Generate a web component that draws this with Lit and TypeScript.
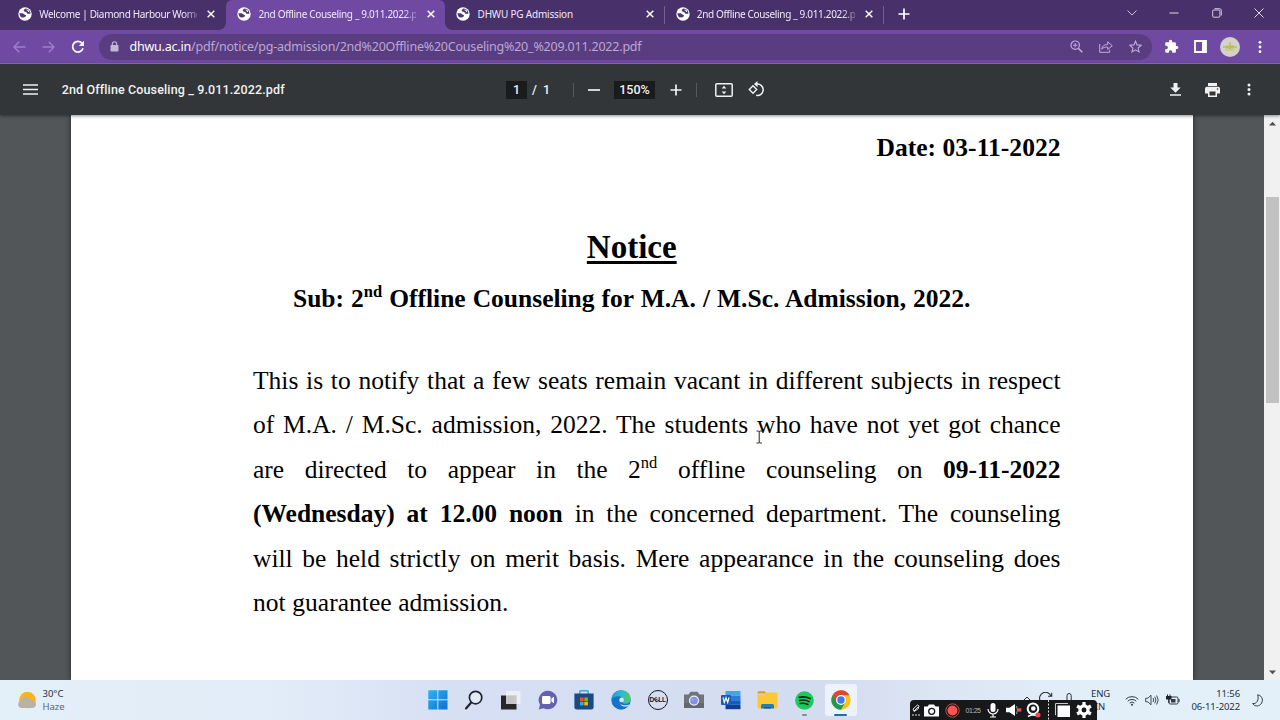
import { LitElement, html, css, svg } from "lit";
import { customElement } from "lit/decorators.js";
import { classMap } from "lit/directives/class-map.js";

const icon = (w: number, h: number, box: string, body: unknown) =>
  html`<svg width=${w} height=${h} viewBox=${box} fill="none">${body}</svg>`;

const globe = () =>
  icon(14, 14, "0 0 14 14", svg`<circle cx="7" cy="7" r="6.7" fill="#fff"/>
    <path d="M1.400 6.200 4.800 6.200 6.300 7.600 8.200 8.200 7.200 9.900 5.200 10.400 3 10.200A6 6 0 0 1 1.400 6.200Z" fill="#513577"/>
    <path d="M7.600 1.500 5.600 3.100 6.200 4.600 8.200 5 9.400 6.700 12.500 6.700A5.600 5.600 0 0 0 7.600 1.500Z" fill="#513577"/>
    <path d="M8.600 2.900 10.600 3.600 10.400 5" stroke="#fff" stroke-width="1"/>`);
const cross = () => icon(8, 8, "0 0 8 8", svg`<path d="M.7.7 7.3 7.3M7.3.7.7 7.3" stroke="#fff" stroke-width="1.5"/>`);

const winLogo = () => icon(20, 20, "0 0 20 20", svg`<defs><linearGradient id="w" x2="1" y2="1"><stop stop-color="#2fb4f0"/><stop offset="1" stop-color="#0872cf"/></linearGradient></defs>
  <path d="M.3.3h9v9h-9zM10.3.3h9.2v9h-9.2zM.3 10.3h9v9.2h-9zM10.3 10.3h9.2v9.2h-9.2z" fill="url(#w)"/>`);
const search = () => icon(20, 20, "0 0 20 20", svg`<circle cx="11.6" cy="7.6" r="6.2" fill="#e3ebf8" stroke="#20242c" stroke-width="1.7"/><path d="M7.2 12.5 2 18.4" stroke="#20242c" stroke-width="2.2" stroke-linecap="round"/>`);
const taskView = () => icon(20, 20, "0 0 20 20", svg`<path d="M0 5.5h15.5V19.5H0z" fill="#25272a"/><path d="M5 1h14.5v13H5z" fill="#f1f1f2" opacity=".9"/><path d="M5 5.5h10.5V14H5z" fill="#c6c6c6"/>`);
const chat = () => icon(20, 20, "0 0 20 20", svg`<path d="M10 .7a9.3 9.3 0 1 1-4.5 17.5L.8 19.4 2 14.8A9.3 9.3 0 0 1 10 .7Z" fill="#6461b5"/><rect x="4" y="6" width="8.6" height="8" rx="1.4" fill="#fff"/><path d="M13.4 8.6 16 6.8v6.5l-2.6-1.8z" fill="#fff"/>`);
const store = () => icon(20, 20, "0 0 20 20", svg`<path d="M5.8 5V1.6q0-.9.9-.9h6.6q.9 0 .9.9V5" stroke="#36a7df" stroke-width="1.4"/><path d="M.4 3.500h19.200V17q0 2.500-2.500 2.500H2.900Q.4 19.500.4 17z" fill="#194a80"/><path d="M6 7.500h3.600v3.600H6z" fill="#f25022"/><path d="M10.300 7.500h3.600v3.600h-3.600z" fill="#7fba00"/><path d="M6 11.800h3.600v3.600H6z" fill="#35a6ee"/><path d="M10.300 11.800h3.600v3.600h-3.600z" fill="#ffb900"/>`);
const edge = () => icon(20, 20, "0 0 20 20", svg`<defs><linearGradient id="e" x2="1"><stop stop-color="#239de0"/><stop offset=".6" stop-color="#35bdc8"/><stop offset="1" stop-color="#5cc84e"/></linearGradient></defs>
  <circle cx="10" cy="10" r="9.700" fill="#1473c8"/><path d="M.4 9C1.600 3 5.600.3 10.200.3c5.500 0 9.500 4 9.500 8.400 0 3-2.500 5-5.400 5-2 0-3.300-.7-2.800-1.600 1.800-2.700-.4-5.800-3.700-5.800-3.400 0-6.200 1.500-7.400 2.700Z" fill="url(#e)"/><path d="M8.300 9.200c-1.300 5 4 7.200 8.800 5.700l1.300-.7-1 1.700c-3.600 1.700-9.800.2-9.100-6.700Z" fill="#e3effa"/><circle cx="10.600" cy="9.900" r="2.300" fill="#dde8f8"/>`);
const dell = () => html`<span class="dell">D<i>E</i>LL</span>`;
const camera = () => icon(20, 18, "0 0 20 18", svg`<path d="M0 3.500h4.500L6.500.8h7l2 2.700H20V17H0z" fill="#70757c"/><path d="M0 12h20v5H0z" fill="#63676e"/><circle cx="10" cy="9.600" r="5.100" fill="#f2f1fa"/><circle cx="10" cy="9.600" r="3.900" fill="#8a8de8"/><circle cx="8.800" cy="8.500" r="1.600" fill="#6fb4ee"/>`);
const word = () => icon(20, 20, "0 0 20 20", svg`<path d="M4.500 1h15v4.700h-15z" fill="#41a5ee"/><path d="M4.500 5.700h15v4.600h-15z" fill="#2b7cd3"/><path d="M4.500 10.300h15v4.400h-15z" fill="#185abd"/><path d="M4.500 14.700h15v4.500h-15z" fill="#103f91"/><rect y="5" width="10" height="10" rx="1" fill="#185abd"/><path d="m2 7.500 1.300 5L5 7.800l1.700 4.700 1.300-5" stroke="#fff" stroke-width="1.200"/>`);
const folder = () => icon(21, 20, "0 0 21 20", svg`<path d="M.5 3q0-1.800 1.600-1.800h5.400L9.600 3.500H.5z" fill="#d99a1d"/><path d="M.5 4.500h7.200l2-1.900h10q.8 0 .8.900V17q0 1.500-1.500 1.500H2q-1.500 0-1.500-1.500z" fill="#fcc934"/><path d="M4 18.500v-3q0-1.500 1.500-1.500h10q1.500 0 1.500 1.500v3z" fill="#1f7dc0"/><path d="M7 17h7v1.500H7z" fill="#0f5d9c"/>`);
const spotify = () => icon(19, 19, "0 0 20 20", svg`<circle cx="10" cy="10" r="9.800" fill="#1fc75c"/><path d="M4.500 6.700c4-1 8-.6 11.500 1.300M5 10c3.500-.9 6.800-.5 9.800 1.200M5.500 13.200c3-.7 5.500-.4 8 1" stroke="#10231a" stroke-width="1.700" stroke-linecap="round"/>`);
const chrome = () => icon(20, 20, "0 0 20 20", svg`<circle cx="10" cy="10" r="9.700" fill="#fbc116"/><path d="M10 10 1.600 5.150A9.700 9.700 0 0 0 10 19.700L14.200 12.400Z" fill="#229a4b"/><path d="M1.600 5.150A9.700 9.700 0 0 1 18.400 5.150H10L5.800 12.400Z" fill="#e04535"/><circle cx="10" cy="10" r="4.900" fill="#fff"/><circle cx="10" cy="10" r="3.700" fill="#3b7ded"/>`);

@customElement("app-root")
class AppRoot extends LitElement {
  static styles = css`
    :host { display: flex; flex-direction: column; position: relative; width: 1280px; height: 720px; overflow: hidden; font-family: "Noto Sans", sans-serif; }
    * { box-sizing: border-box; }
    svg { display: block; flex: none; }
    .c { display: flex; align-items: center; justify-content: center; flex: none; }
    .tabs { height: 30px; background: #48306a; display: flex; padding-left: 7px; flex: none; color: #efe9f6; }
    .tab { width: 219.200px; display: flex; align-items: center; padding: 0 11px 2px; position: relative; }
    .tab.on { background: #7049a3; border-radius: 6px 6px 0 0; }
    .tab.on::before, .tab.on::after { content: ""; position: absolute; bottom: 0; width: 7px; height: 7px; }
    .tab.on::before { right: 100%; background: radial-gradient(circle at 0 0, transparent 6.500px, #7049a3 7px); }
    .tab.on::after { left: 100%; background: radial-gradient(circle at 100% 0, transparent 6.500px, #7049a3 7px); }
    .tab.sep { background: linear-gradient(#73608c, #73608c) right 6px / 1px 18px no-repeat; }
    .title { width: 158px; margin-left: 7.200px; font-size: 10px; letter-spacing: -.2px; white-space: nowrap; flex: none; line-height: 16px; }
    .title.fade { letter-spacing: -.34px; -webkit-mask: linear-gradient(90deg, #000 145px, transparent 164px); }
    .tab .x { margin-left: 10.300px; }
    .plus { width: 40px; height: 28px; }
    .win { margin-left: auto; display: flex; padding: 0 0 5px; }
    .win .c { width: 42.300px; }
    .bar { height: 34px; background: #7049a3; border-bottom: 1px solid #8d6cba; display: flex; align-items: center; padding: 0 6px 0 4.500px; flex: none; }
    .bar .n { width: 29.500px; }
    .omni { margin-left: 5.500px; width: 1053px; height: 26px; border-radius: 13px; background: #5a3d80; display: flex; align-items: center; padding-left: 11.500px; color: #bca6d5; flex: none; }
    .url { margin-left: 10.500px; font-size: 12.500px; line-height: 18px; letter-spacing: -.21px; white-space: nowrap; }
    .url b { font-weight: 400; color: #fff; }
    .acts { margin-left: auto; display: flex; padding-right: 1px; }
    .acts .c { width: 29.500px; }
    .ext { display: flex; margin-left: 5px; align-items: center; }
    .ext > .c { width: 29.600px; }
    .avatar { width: 20px; height: 20px; border-radius: 50%; background: #d3d1c8; }
    .pdf { height: 51px; background: #323639; display: flex; align-items: center; color: #f1f1f1; font: 500 12.500px Roboto, sans-serif; flex: none; position: relative; z-index: 1; box-shadow: 0 1px 3px rgba(0,0,0,.45); }
    .menu { width: 61px; }
    .name { width: 445px; padding-left: .7px; white-space: nowrap; letter-spacing: .13px; }
    .box { height: 18px; background: #191b1c; }
    .gap { width: 18px; }
    .fill { flex: 1; }
    .rule { width: 1px; height: 14px; background: #55595c; flex: none; }
    .view { flex: 1; min-height: 0; display: flex; background: #525659; }
    .page { margin-left: 71px; width: 1121.500px; background: #fff; padding: 14px 132px 0 182px; overflow: hidden; box-shadow: 0 0 5px rgba(0,0,0,.6); font: 25.500px "Liberation Serif", serif; color: #000; }
    .line { height: 44.600px; line-height: 44.600px; white-space: nowrap; text-align-last: justify; }
    .line.last { text-align-last: left; letter-spacing: .05px; }
    sup { font-size: 16.500px; line-height: 0; vertical-align: 10.500px; }
    .date { text-align: right; font-weight: 700; line-height: 38px; height: 38px; letter-spacing: .04px; }
    h1 { margin: 59px 0 0; padding-right: 50px; text-align: center; font-size: 33px; line-height: 42px; text-decoration: underline; text-decoration-thickness: 3px; text-underline-offset: 3px; }
    .sub { margin: 6px 90px 34.500px 40px; font-weight: 700; height: 50px; line-height: 50px; }
    .scroll { margin-left: auto; width: 16px; background: #f1f1f1; display: flex; flex-direction: column; align-items: center; padding: 6px 0 5px; }
    .thumb { width: 13px; height: 206px; background: #c1c1c1; margin-top: 71px; }
    .scroll .dn { margin-top: auto; }
    .task { height: 40px; flex: none; display: flex; align-items: center; background: linear-gradient(90deg, #e3eff9 0, #e2ecf8 22%, #d6dff3 36%, #d4dcf0 65%, #dbe4f3 72%, #e2eff9 85%, #e3f0fa 100%); color: #26303c; font-size: 9.500px; line-height: 13.500px; }
    .weather { width: 419.400px; padding-left: 16.500px; display: flex; align-items: center; gap: 6px; }
    .weather em { font-style: normal; color: #5b6673; }
    .app { width: 36.670px; height: 40px; position: relative; }
    .app.on::before { content: ""; position: absolute; inset: 4px 2px; border-radius: 3px; background: #eef2fb; }
    .app svg { position: relative; }
    .app.on::after, .app.run::after { content: ""; position: absolute; bottom: 4px; width: 13px; height: 2.500px; border-radius: 2px; background: #1d6fae; }
    .app.run::after { width: 5px; background: #858b96; }
    .dell { width: 20px; height: 20px; border: 1.500px solid #15181d; border-radius: 50%; font: 700 6.500px/17px "Liberation Sans", sans-serif; text-align: center; letter-spacing: -.2px; color: #15181d; }
    .dell i { display: inline-block; transform: rotate(-35deg); font-style: normal; }
    .tray { margin-left: auto; display: flex; align-items: center; height: 40px; }
    .under { display: flex; gap: 8px; align-self: flex-start; padding-top: 12px; margin-right: 18px; }
    .under svg:first-child { margin: 2px -1px 0 0; }
    .under svg:nth-child(2) { margin-right: 4px; }
    .lang { width: 30.500px; letter-spacing: -.1px; }
    .lang div + div { padding-left: 4px; }
    .tray .s { width: 20.500px; }
    .clock { width: 57px; text-align: right; letter-spacing: -.1px; }
    .moon { width: 40px; padding-right: 6px; }
    .rec { position: absolute; left: 910px; top: 700px; width: 187px; height: 20px; background: #17181a; border-radius: 4px 4px 0 0; display: flex; align-items: center; }
    .time { font: 7px "Liberation Sans", sans-serif; color: #b8b8b8; width: 18px; text-align: center; letter-spacing: -.5px; }
    .caret { position: absolute; left: 755px; top: 430px; }
  `;

  private tab(t: string, fade = true, on = false, sep = false) {
    return html`<div class=${classMap({ tab: true, on, sep })}>${globe()}<div class=${classMap({ title: true, fade })}>${t}</div><div class="x">${cross()}</div></div>`;
  }

  private cell(w: number, body: unknown) {
    return html`<div class="c" style="width:${w}px">${body}</div>`;
  }

  render() {
    const p = "#c3abdd";
    const apps: [unknown, string][] = [
      [winLogo(), ""], [search(), ""], [taskView(), ""], [chat(), ""], [store(), ""], [edge(), ""],
      [dell(), ""], [camera(), ""], [word(), ""], [folder(), ""], [spotify(), "run"], [chrome(), "on"],
    ];
    return html`
      <div class="tabs">
        ${this.tab("Welcome | Diamond Harbour Wome")}
        ${this.tab("2nd Offline Couseling _ 9.011.2022.p", true, true)}
        ${this.tab("DHWU PG Admission", false, false, true)}
        ${this.tab("2nd Offline Couseling _ 9.011.2022.p", true, false, true)}
        <div class="c plus">${icon(12, 12, "0 0 12 12", svg`<path d="M6 .5v11M.5 6h11" stroke="#fff" stroke-width="1.700"/>`)}</div>
        <div class="win">
          <div class="c">${icon(10, 6, "0 0 10 6", svg`<path d="m.5.5 4.500 4.500L9.500.5" stroke="#c9bdd8"/>`)}</div>
          <div class="c">${icon(10, 2, "0 0 10 2", svg`<path d="M.5 1h9" stroke="#e0d8ea"/>`)}</div>
          <div class="c">${icon(10, 10, "0 0 10 10", svg`<rect x=".7" y="2" width="7.200" height="7.200" rx="1" stroke="#d5cbe2"/><path d="M2.500.7h5q1.800 0 1.800 1.800v5" stroke="#d5cbe2"/>`)}</div>
          <div class="c">${icon(10, 10, "0 0 10 10", svg`<path d="m.5.5 9 9m0-9-9 9" stroke="#e0d8ea"/>`)}</div>
        </div>
      </div>
      <div class="bar">
        <div class="c n">${icon(13, 12, "0 0 13 12", svg`<path d="M12.500 6H1M6.200.8 1 6l5.200 5.200" stroke="#9f7fc8" stroke-width="1.400"/>`)}</div>
        <div class="c n">${icon(13, 12, "0 0 13 12", svg`<path d="M.5 6H12M6.800.8 12 6l-5.200 5.200" stroke="#9f7fc8" stroke-width="1.400"/>`)}</div>
        <div class="c n">${icon(14, 14, "0 0 14 14", svg`<path d="M12 8.300A5.300 5.300 0 1 1 11 3.300" stroke="#fff" stroke-width="1.700"/><path d="M13 .8v5.200H7.800z" fill="#fff"/>`)}</div>
        <div class="omni">
          ${icon(9, 11, "0 0 9 11", svg`<rect x=".5" y="4" width="8" height="6.500" rx=".8" fill="#c5b6d8"/><path d="M2.300 4.500V3a2.200 2.200 0 0 1 4.400 0v1.500" stroke="#c5b6d8" stroke-width="1.100"/>`)}
          <div class="url"><b>dhwu.ac.in</b>/pdf/notice/pg-admission/2nd%20Offline%20Couseling%20_%209.011.2022.pdf</div>
          <div class="acts">
            <div class="c">${icon(13, 13, "0 0 13 13", svg`<circle cx="5.200" cy="5.200" r="4.200" stroke=${p} stroke-width="1.200"/><path d="m8.300 8.300 4 4" stroke=${p} stroke-width="1.600"/><path d="M3 5.200h4.400M5.200 3v4.400" stroke=${p}/>`)}</div>
            <div class="c">${icon(14, 13, "0 0 14 13", svg`<path d="M.7 4v8.300h10V9.800" stroke=${p}/><path d="M2.700 9.300c.5-3.500 2.600-4.800 6-4.800V1.800l4.600 4-4.600 3.700V7C6 7 4 7.500 2.700 9.300Z" stroke=${p} stroke-linejoin="round"/>`)}</div>
            <div class="c">${icon(13, 13, "0 0 13 13", svg`<path d="m6.500 1.200 1.600 3.700 4 .4-3 2.700.9 3.900-3.500-2.100L3 11.900 3.900 8 .9 5.300l4-.4z" stroke=${p} stroke-width="1.100"/>`)}</div>
          </div>
        </div>
        <div class="ext">
          <div class="c">${icon(15, 15, "0 0 24 24", svg`<path d="M20.500 11H19V7c0-1.100-.9-2-2-2h-4V3.500a2.500 2.500 0 0 0-5 0V5H4c-1.100 0-2 .9-2 2v3.800h1.500a2.700 2.700 0 0 1 0 5.400H2V20c0 1.100.9 2 2 2h3.800v-1.500a2.700 2.700 0 0 1 5.400 0V22H17c1.100 0 2-.9 2-2v-4h1.500a2.500 2.500 0 0 0 0-5z" fill="#fff"/>`)}</div>
          <div class="c">${icon(13, 13, "0 0 13 13", svg`<path d="M1 1h11v11H1z" stroke="#fff" stroke-width="1.800"/><path d="M8 1h4v11H8z" fill="#fff"/>`)}</div>
          <div class="c"><div class="c avatar">${icon(14, 10, "0 0 14 10", svg`<path d="M0 5h14M7 0v8" stroke="#a5a979"/><path d="M3 3.500h8v3H3z" fill="#b8c440"/><path d="M2 8h10" stroke="#c8c861"/>`)}</div></div>
          <div class="c">${icon(4, 14, "0 0 4 14", svg`<circle cx="2" cy="2.300" r="1.400" fill="#fff"/><circle cx="2" cy="7" r="1.400" fill="#fff"/><circle cx="2" cy="11.700" r="1.400" fill="#fff"/>`)}</div>
        </div>
      </div>
      <div class="pdf">
        <div class="c menu">${icon(15, 11, "0 0 15 11", svg`<path d="M0 1h15M0 5.500h15M0 10h15" stroke="#f1f1f1" stroke-width="1.700"/>`)}</div>
        <div class="name">2nd Offline Couseling _ 9.011.2022.pdf</div>
        <div class="c box" style="width:21px">1</div>
        ${this.cell(28, html`/&nbsp; 1`)}
        <div class="gap"></div>
        <div class="rule"></div>
        ${this.cell(40, icon(12, 2, "0 0 12 2", svg`<path d="M0 1h12" stroke="#f1f1f1" stroke-width="1.700"/>`))}
        <div class="c box" style="width:41px">150%</div>
        ${this.cell(41, icon(12, 12, "0 0 12 12", svg`<path d="M6 .5v11M.5 6h11" stroke="#f1f1f1" stroke-width="1.700"/>`))}
        <div class="rule"></div>
        ${this.cell(54, icon(18, 14, "0 0 18 14", svg`<rect x=".8" y=".8" width="16.400" height="12.400" rx="1" stroke="#f1f1f1" stroke-width="1.500"/><path d="M9 2.700 11.300 5.500H6.700zM9 11.300 11.300 8.500H6.700z" fill="#f1f1f1"/>`))}
        ${this.cell(11, icon(17, 17, "0 0 17 17", svg`<path d="M5 4.800 8.700 8.500 5 12.200 1.300 8.500z" stroke="#f1f1f1" stroke-width="1.400"/><path d="M8.800 3.100a5.700 5.700 0 1 1-.6 11.200" stroke="#f1f1f1" stroke-width="1.500"/><path d="M9.500 0v6.200L6 3.100z" fill="#f1f1f1"/>`))}
        <div class="fill"></div>
        ${this.cell(37, icon(11, 13, "0 0 11 13", svg`<path d="M3.500 0h4v4.500h3.200L5.500 9.800.3 4.500h3.200zM0 11.200h11v1.500H0z" fill="#f1f1f1"/>`))}
        ${this.cell(37, icon(15, 14, "0 0 15 14", svg`<path d="M3 0h9v3H3z" fill="#f1f1f1"/><path d="M2 3.700h11q2 0 2 2V10.500h-3V14H3v-3.500H0V5.700q0-2 2-2zM4.500 8.500v4h6v-4z" fill="#f1f1f1" fill-rule="evenodd"/><circle cx="12.500" cy="6" r=".8" fill="#323639"/>`))}
        ${this.cell(36, icon(4, 13, "0 0 4 13", svg`<circle cx="2" cy="2" r="1.500" fill="#f1f1f1"/><circle cx="2" cy="6.500" r="1.500" fill="#f1f1f1"/><circle cx="2" cy="11" r="1.500" fill="#f1f1f1"/>`))}
        ${this.cell(13, "")}
      </div>
      <div class="view">
        <div class="page">
          <div class="date">Date: 03-11-2022</div>
          <h1>Notice</h1>
          <div class="line sub">Sub: 2<sup>nd</sup> Offline Counseling for M.A. / M.Sc. Admission, 2022.</div>
          <div class="line">This is to notify that a few seats remain vacant in different subjects in respect</div>
          <div class="line">of M.A. / M.Sc. admission, 2022. The students who have not yet got chance</div>
          <div class="line">are directed to appear in the 2<sup>nd</sup> offline counseling on <b>09-11-2022</b></div>
          <div class="line"><b>(Wednesday) at 12.00 noon</b> in the concerned department. The counseling</div>
          <div class="line">will be held strictly on merit basis. Mere appearance in the counseling does</div>
          <div class="line last">not guarantee admission.</div>
        </div>
        <div class="scroll">
          ${icon(7, 5, "0 0 7 5", svg`<path d="M0 4.500h7L3.500.8z" fill="#505050"/>`)}
          <div class="thumb"></div>
          <div class="dn">${icon(7, 5, "0 0 7 5", svg`<path d="M0 .5h7L3.500 4.200z" fill="#505050"/>`)}</div>
        </div>
      </div>
      <div class="task">
        <div class="weather">
          ${icon(20, 18, "0 0 20 18", svg`<circle cx="10.500" cy="9" r="8.300" fill="#f7b324"/><path d="M4 17a4 4 0 0 1-.5-7.500C5 6.500 8 5.500 10.500 6.500c2 .5 3 1.700 3.700 3 3-.2 4.800 1.200 4.800 3.700S17.200 17 15 17z" fill="#b9b2a4"/>`)}
          <div>30°C<br><em>Haze</em></div>
        </div>
        ${apps.map(([i, s]) => html`<div class="c app ${s}">${i}</div>`)}
        <div class="tray">
          <div class="under">
            ${icon(10, 10, "0 0 10 10", svg`<path d="m1 7 4-4 4 4" stroke="#26303c"/>`)}
            ${icon(14, 12, "0 0 14 12", svg`<path d="M1 8.500A5.800 5.800 0 0 1 12 4M12.700 .8V4.300H9" stroke="#26303c" stroke-width="1.100"/>`)}
            ${icon(8, 14, "0 0 8 14", svg`<rect x="2" y="1.500" width="4.200" height="12" rx="2.100" stroke="#26303c"/>`)}
          </div>
          <div class="lang"><div>ENG</div><div>IN</div></div>
          <div class="c s">${icon(14, 11, "0 0 14 11", svg`<path d="M.7 4.200a9 9 0 0 1 12.600 0M2.700 6.200a6.200 6.200 0 0 1 8.600 0M4.700 8.100a3.300 3.300 0 0 1 4.600 0" stroke="#303944"/><circle cx="7" cy="9.700" r="1" fill="#303944"/>`)}</div>
          <div class="c s">${icon(14, 12, "0 0 14 12", svg`<path d="M.7 4.200h2.200L6 1.200v9.600l-3.100-3H.7z" stroke="#303944" stroke-width=".9"/><path d="M8 4q1.300 2 0 4M9.800 2.700q2.200 3.300 0 6.600M11.700 1.500q3 4.500 0 9" stroke="#303944" stroke-width=".9"/>`)}</div>
          <div class="c s">${icon(14, 12, "0 0 14 12", svg`<rect x="3" y="3" width="9" height="7" rx="1.300" stroke="#303944"/><path d="M5 5h4.500v3.500H5z" fill="#303944"/><path d="M12.500 5h1v3h-1zM0 2h5.500v3.500H0zM1 .5h1V2H1zM3.500.5h1V2h-1zM2.300 5h1v4h-1z" fill="#1c232b"/>`)}</div>
          <div class="clock">11:56<br>06-11-2022</div>
          <div class="c moon">${icon(11, 13, "0 0 11 13", svg`<path d="M5.700.8c5 .7 6 6.500 3 9.500-2.500 2.500-6.500 2-8-.8 4 .7 6.500-3.500 5-8.700Z" stroke="#303944"/>`)}</div>
        </div>
      </div>
      <div class="rec">
        ${this.cell(12, icon(8, 12, "0 0 8 12", svg`<path d="m1 5 4.500-4 1.500 1-1 3-4 2.500zM2 7l4-4" stroke="#ddd"/><path d="M0 11h2M3 11h2M6 11h2" stroke="#ddd"/>`))}
        ${this.cell(18, icon(15, 13, "0 0 15 13", svg`<path d="M0 2.500h3.500L5 .5h5l1.500 2H15V12.500H0z" fill="#fff"/><circle cx="7.700" cy="7.300" r="3" stroke="#17181a" stroke-width="1.300"/>`))}
        ${this.cell(24, icon(15, 15, "0 0 15 15", svg`<circle cx="7.500" cy="7.500" r="6.700" stroke="#c74945"/><circle cx="7.500" cy="7.500" r="5" fill="#fa5550"/>`))}
        <div class="time">01:25</div>
        ${this.cell(21, icon(12, 15, "0 0 12 15", svg`<rect x="3.500" y="0" width="5" height="9" rx="2.500" fill="#fff"/><path d="M1 6a5 5 0 0 0 10 0M6 11v3M3 14h6" stroke="#fff" stroke-width="1.200"/>`))}
        ${this.cell(22, icon(16, 12, "0 0 16 12", svg`<path d="M0 3.700h3.500L9 0v12L3.500 8.300H0z" fill="#fff"/><path d="M10.500 2q2 4 0 8" stroke="#999"/><rect x="12" y="4.300" width="3.300" height="3.300" fill="#f24d49"/>`))}
        ${this.cell(17, icon(15, 16, "0 0 15 16", svg`<circle cx="7" cy="6.700" r="5.300" stroke="#fff" stroke-width="2"/><circle cx="7.300" cy="6.500" r="2.300" fill="#fff"/><path d="M2 14.500q5-3 10 0" stroke="#fff" stroke-width="1.500"/><circle cx="12" cy="13" r="2.500" fill="#ed4c4a"/>`))}
        ${this.cell(12, icon(1, 20, "0 0 1 20", svg`<path d="M.5 0v20" stroke="#ddd" stroke-dasharray="2 1.500"/>`))}
        ${this.cell(16, icon(15, 14, "0 0 15 14", svg`<path d="M2.500 2.500H15V14H2.500z" fill="#fff"/><path d="M.5 12V.5H13" stroke="#ccc"/>`))}
        ${this.cell(27, icon(16, 16, "0 0 16 16", svg`<circle cx="8" cy="8" r="4" stroke="#fff" stroke-width="3.400"/><path d="M8 0v4M8 12v4M1.100 4l3.400 2M11.500 10l3.400 2M1.100 12l3.400-2M11.500 6l3.400-2" stroke="#fff" stroke-width="3.200"/><circle cx="8" cy="8" r="2.400" fill="#17181a"/>`))}
      </div>
      <div class="caret">${icon(8, 14, "0 0 8 14", svg`<path d="M1.500 1h2l.7.7.7-.7h2M4.200 1.500v11M1.500 13h2l.7-.6.7.6h2" stroke="#222" stroke-width="1"/>`)}</div>
    `;
  }
}
